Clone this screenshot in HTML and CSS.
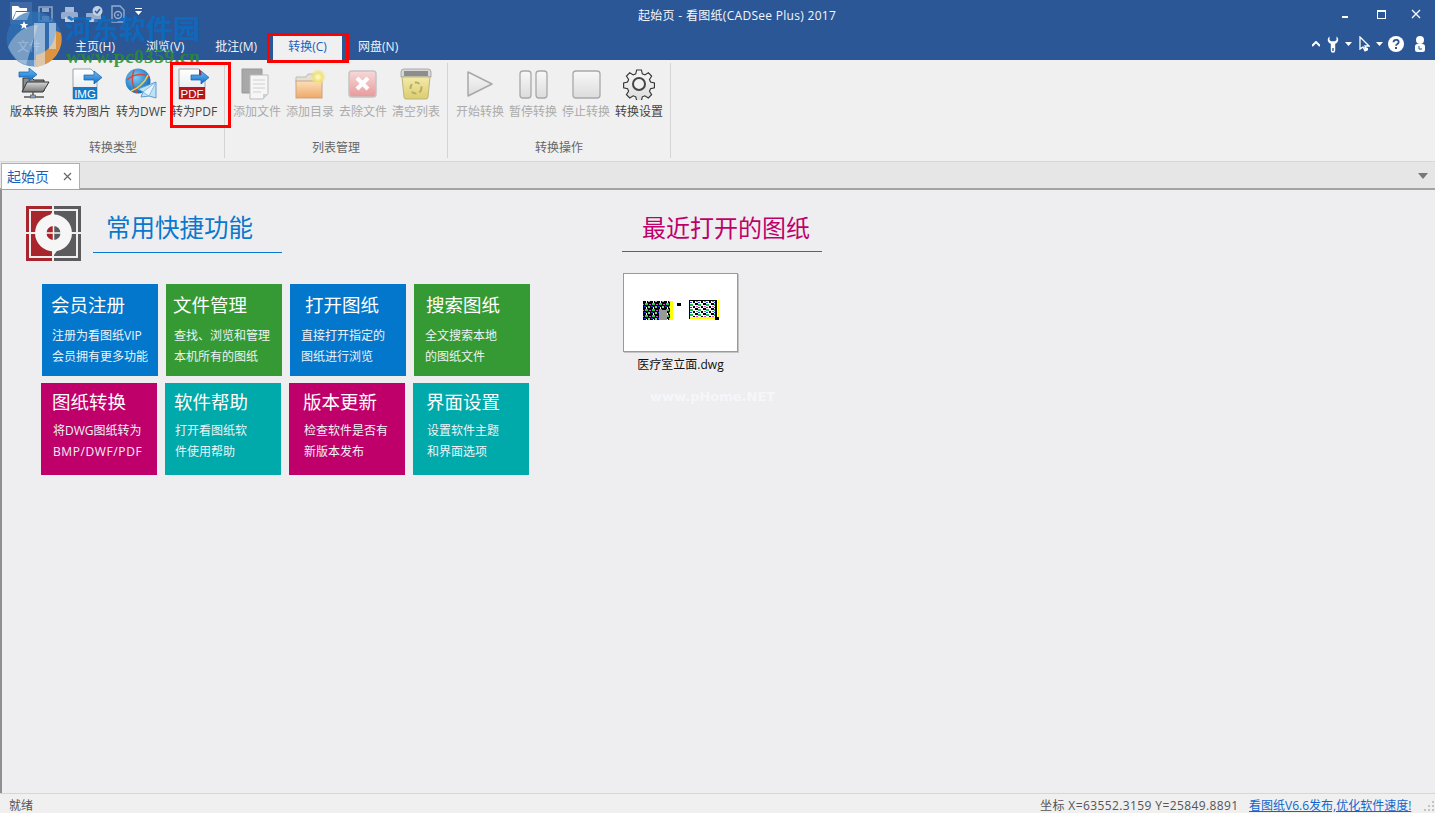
FILE: index.html
```html
<!DOCTYPE html>
<html lang="zh-CN">
<head>
<meta charset="utf-8">
<title>看图纸(CADSee Plus) 2017</title>
<link rel="stylesheet" href="styles.css">
</head>
<body>
<svg class="defs" width="0" height="0" aria-hidden="true">
  <defs>
    <linearGradient id="arrowG" x1="0" y1="0" x2="0" y2="1"><stop offset="0" stop-color="#6db9f2"/><stop offset="1" stop-color="#0e6fc9"/></linearGradient>
    <linearGradient id="pageG" x1="0" y1="0" x2="0" y2="1"><stop offset="0" stop-color="#ffffff"/><stop offset="1" stop-color="#dfe3e8"/></linearGradient>
    <linearGradient id="folderG" x1="0" y1="0" x2="0" y2="1"><stop offset="0" stop-color="#d8d8d8"/><stop offset="1" stop-color="#777"/></linearGradient>
    <linearGradient id="orangeG" x1="0" y1="0" x2="0" y2="1"><stop offset="0" stop-color="#fbe0ba"/><stop offset="1" stop-color="#f0a868"/></linearGradient>
    <linearGradient id="binG" x1="0" y1="0" x2="0" y2="1"><stop offset="0" stop-color="#f3eaa8"/><stop offset="1" stop-color="#dccd70"/></linearGradient>
    <linearGradient id="redG" x1="0" y1="0" x2="0" y2="1"><stop offset="0" stop-color="#f7d9d9"/><stop offset="1" stop-color="#e79a9c"/></linearGradient>
    <linearGradient id="glassG" x1="0" y1="0" x2="0" y2="1"><stop offset="0" stop-color="#f8f8f8"/><stop offset="1" stop-color="#dcdcdc"/></linearGradient>
    <radialGradient id="globeG" cx=".4" cy=".35" r=".7"><stop offset="0" stop-color="#7fd0f5"/><stop offset="1" stop-color="#0b62b8"/></radialGradient>
    <radialGradient id="glowG"><stop offset="0" stop-color="#fffbd0"/><stop offset=".55" stop-color="#efe27a"/><stop offset="1" stop-color="#efe27a" stop-opacity="0"/></radialGradient>
    <pattern id="noiseA" width="7" height="6" patternUnits="userSpaceOnUse">
      <rect width="7" height="6" fill="#000"/>
      <rect x="1" y="0" width="3" height="2" fill="#19d640"/>
      <rect x="5" y="1" width="2" height="1" fill="#e048e0"/>
      <rect x="4" y="3" width="2" height="2" fill="#7ad98a"/>
      <rect x="0" y="3" width="2" height="1" fill="#1c3cf0"/>
      <rect x="2" y="4" width="1" height="2" fill="#fff"/>
    </pattern>
    <pattern id="noiseB" width="8" height="5" patternUnits="userSpaceOnUse">
      <rect width="8" height="5" fill="#fff"/>
      <rect x="0" y="0" width="3" height="2" fill="#000"/>
      <rect x="3" y="1" width="3" height="2" fill="#1bbf50"/>
      <rect x="6" y="3" width="2" height="2" fill="#000"/>
      <rect x="1" y="3" width="2" height="1" fill="#e040d0"/>
      <rect x="3" y="4" width="2" height="1" fill="#1c3cf0"/>
    </pattern>
  </defs>
</svg>

<div class="app">
  <header class="chrome">
    <div class="title-row">
      <div class="qat">
        <span class="qat-open">
          <svg width="20" height="18" viewBox="0 0 20 18"><path d="M1 16V2h6l2 2h7v3H5L1 16zM5 8h14l-3 8H2z" fill="#fff"/></svg>
        </span>
        <svg class="qat-icon" width="15" height="16" viewBox="0 0 15 16"><path d="M1 1h13v14H1z" fill="none" stroke="#8ea6c9" stroke-width="1.500"/><rect x="4" y="2" width="7" height="4" fill="#8ea6c9"/><rect x="4" y="10" width="7" height="5" fill="#8ea6c9"/></svg>
        <svg class="qat-icon" width="17" height="17" viewBox="0 0 17 17"><rect x="4" y="1" width="9" height="5" fill="#a8bad4"/><rect x="0" y="6" width="17" height="7" rx="1.500" fill="#96acce"/><rect x="4" y="11" width="9" height="5" fill="#c3d0e2"/></svg>
        <svg class="qat-icon" width="17" height="17" viewBox="0 0 17 17"><rect x="0" y="7" width="15" height="7" rx="1" fill="#96acce"/><rect x="3" y="13" width="9" height="3" fill="#c3d0e2"/><circle cx="11.500" cy="5" r="5" fill="#c3d0e2"/><path d="M9 5l2 2 3-4" fill="none" stroke="#2b5797" stroke-width="1.400"/></svg>
        <svg class="qat-icon" width="15" height="18" viewBox="0 0 15 18"><path d="M1 1h8l4 4v12H1z" fill="none" stroke="#96acce" stroke-width="1.400"/><circle cx="7" cy="10" r="3.500" fill="none" stroke="#96acce" stroke-width="1.400"/><circle cx="7" cy="10" r="1" fill="#96acce"/></svg>
        <svg class="qat-caret" width="7" height="7" viewBox="0 0 7 7"><rect x="0" y="0" width="7" height="1" fill="#fff"/><path d="M0 3h7L3.500 7z" fill="#fff"/></svg>
      </div>
      <div class="window-title">起始页 - 看图纸(CADSee Plus) 2017</div>
      <div class="window-controls">
        <svg class="win-min" width="10" height="10" viewBox="0 0 10 10"><rect x="1" y="7" width="6" height="2" fill="#fff"/></svg>
        <svg class="win-max" width="10" height="10" viewBox="0 0 10 10"><rect x=".5" y="1.500" width="8" height="8" fill="none" stroke="#fff"/><rect y="1" width="9" height="2" fill="#fff"/></svg>
        <svg class="win-close" width="10" height="10" viewBox="0 0 10 10"><path d="M1 1l8 8M9 1L1 9" stroke="#fff" stroke-width="1.300"/></svg>
      </div>
    </div>
    <div class="tab-row">
      <nav class="menu-tabs">
        <span class="menu-tab first">文件</span>
        <span class="menu-tab">主页(H)</span>
        <span class="menu-tab">浏览(V)</span>
        <span class="menu-tab">批注(M)</span>
        <span class="menu-tab active">转换(C)</span>
        <span class="menu-tab">网盘(N)</span>
      </nav>
      <div class="tools">
        <svg class="tool-up" width="8" height="6" viewBox="0 0 8 6"><path d="M0 5l4-4 4 4" fill="none" stroke="#fff" stroke-width="2"/></svg>
        <svg class="tool-wrench" width="12" height="17" viewBox="0 0 12 17"><path d="M2.500.5C0 2.500 0 6.300 3.800 7.800V14.500a2.200 2.200 0 0 0 4.400 0V7.800C12 6.300 12 2.500 9.500.5V4L8 5.200H4L2.500 4z" fill="#fff"/><rect x="5.300" y="12" width="1.400" height="3" fill="#2b5797"/></svg>
        <svg class="tool-caret" width="7" height="4" viewBox="0 0 7 4"><path d="M0 0h7L3.500 4z" fill="#fff"/></svg>
        <svg class="tool-cursor" width="11" height="16" viewBox="0 0 11 16"><path d="M1 1v12l3-2 2 4 2-1-2-4h4z" fill="#2b5797" stroke="#fff" stroke-width="1.300"/><path d="M5 11l4 1v2l-3 1z" fill="#fff"/></svg>
        <svg class="tool-caret second" width="7" height="4" viewBox="0 0 7 4"><path d="M0 0h7L3.500 4z" fill="#fff"/></svg>
        <svg class="tool-help" width="16" height="16" viewBox="0 0 16 16"><circle cx="8" cy="8" r="8" fill="#fff"/><path d="M5.500 6.200c0-3.200 5.200-3.200 5.200-.2 0 2-2.700 1.800-2.700 3.800" fill="none" stroke="#2b5797" stroke-width="1.800"/><rect x="7" y="11" width="2" height="2" fill="#2b5797"/></svg>
        <svg class="tool-user" width="12" height="16" viewBox="0 0 12 16"><circle cx="6" cy="4" r="4" fill="#fff"/><rect x="1" y="8" width="10" height="8" rx="2.500" fill="#fff"/><path d="M5 10v3h3" fill="none" stroke="#2b5797"/></svg>
      </div>
    </div>
  </header>

  <section class="ribbon">
    <div class="group group-a">
      <div class="group-items">
        <div class="rb">
          <svg width="32" height="32" viewBox="0 0 32 32">
            <path d="M5 10h9l2 2h10v11H5z" fill="#8d8d8d" stroke="#333"/>
            <path d="M9 14h22l-6 10H4z" fill="url(#folderG)" stroke="#333"/>
            <path d="M15 24v4M6 29h20" stroke="#555" stroke-width="1.500"/>
            <rect x="12.500" y="27" width="5" height="3" fill="#8aa3c0" stroke="#555" stroke-width=".6"/>
            <path d="M1 4h10V0l8 6.500-8 6.500V9H1z" fill="url(#arrowG)" stroke="#0b5fae" stroke-width=".7"/>
          </svg>
          <span class="rb-label">版本转换</span>
        </div>
        <div class="rb">
          <svg width="32" height="32" viewBox="0 0 32 32">
            <path d="M2 1h18l6 6v24H2z" fill="url(#pageG)" stroke="#9aa4ae"/>
            <rect x="2" y="19" width="24" height="12" fill="#1479c7"/>
            <text x="14" y="29.500" class="svg-tag">IMG</text>
            <path d="M13 7h10V3l8 6.500-8 6.500v-4H13z" fill="url(#arrowG)" stroke="#0b5fae" stroke-width=".7"/>
          </svg>
          <span class="rb-label">转为图片</span>
        </div>
        <div class="rb">
          <svg width="32" height="32" viewBox="0 0 32 32">
            <circle cx="13" cy="13" r="12.500" fill="url(#globeG)"/>
            <path d="M2 12c6-6 16-7 22-3M9 2c-3 8-2 16 3 23" fill="none" stroke="#d9473f" stroke-width="1.500"/>
            <path d="M6 23c6-2 14-8 17-16" fill="none" stroke="#f2d23c" stroke-width="1.500"/>
            <path d="M31 14v16l-7-2-8 1 2-5-5-3z" fill="#bfe2f8" stroke="#5b9ccc"/>
            <path d="M31 14L18 24l6 4z" fill="#e8f6ff" stroke="#5b9ccc" stroke-width=".6"/>
          </svg>
          <span class="rb-label">转为DWF</span>
        </div>
        <div class="rb">
          <svg width="32" height="32" viewBox="0 0 32 32">
            <path d="M1 1h20l6 6v24H1z" fill="url(#pageG)" stroke="#9aa4ae"/>
            <path d="M21 1l6 6h-6z" fill="#c82127"/>
            <rect x="1" y="19" width="26" height="12" fill="#b5161c"/>
            <text x="14" y="29.500" class="svg-tag">PDF</text>
            <path d="M13 7h10V3l8 6.500-8 6.500v-4H13z" fill="url(#arrowG)" stroke="#0b5fae" stroke-width=".7"/>
          </svg>
          <span class="rb-label">转为PDF</span>
        </div>
      </div>
      <div class="group-label">转换类型</div>
    </div>

    <div class="group group-b">
      <div class="group-items">
        <div class="rb off">
          <svg width="32" height="32" viewBox="0 0 32 32">
            <path d="M1 1h20v24H1z" fill="#a8a8a8" stroke="#999"/>
            <path d="M9 7h18v19l-5 5H9z" fill="#f6f6f6" stroke="#bbb"/>
            <path d="M12 12h12M12 16h12M12 20h12M12 24h8" stroke="#d0d0d0"/>
            <path d="M27 26l-5 5v-5z" fill="#d0d0d0"/>
          </svg>
          <span class="rb-label">添加文件</span>
        </div>
        <div class="rb off">
          <svg width="32" height="32" viewBox="0 0 32 32">
            <path d="M2 9h10l2-3h10v8H2z" fill="#e6e0d4" stroke="#bbb"/>
            <rect x="2" y="13" width="26" height="17" fill="url(#orangeG)" stroke="#c9a383"/>
            <circle cx="24" cy="9" r="8" fill="url(#glowG)"/>
          </svg>
          <span class="rb-label">添加目录</span>
        </div>
        <div class="rb off">
          <svg width="32" height="32" viewBox="0 0 32 32">
            <rect x="2" y="3" width="27" height="26" rx="3" fill="url(#redG)" stroke="#c4c4c4" stroke-width="1.500"/>
            <path d="M10 10l11 11M21 10L10 21" stroke="#fff" stroke-width="4"/>
          </svg>
          <span class="rb-label">去除文件</span>
        </div>
        <div class="rb off">
          <svg width="32" height="32" viewBox="0 0 32 32">
            <path d="M1 4q0-3 3-3h24q3 0 3 3v5H1z" fill="#d6d6d6" stroke="#aaa"/>
            <rect x="4" y="3" width="24" height="5" fill="#8d8d8d"/>
            <path d="M2 9h28l-2 20q0 2-2 2H6q-2 0-2-2z" fill="url(#binG)" stroke="#bcb47a"/>
            <circle cx="16" cy="20" r="5.500" fill="none" stroke="#b5ac6a" stroke-width="2" stroke-dasharray="5 3"/>
          </svg>
          <span class="rb-label">清空列表</span>
        </div>
      </div>
      <div class="group-label">列表管理</div>
    </div>

    <div class="group group-b group-c">
      <div class="group-items">
        <div class="rb off">
          <svg width="32" height="32" viewBox="0 0 32 32"><path d="M4 4l24 12L4 28z" fill="url(#glassG)" stroke="#a8a8a8" stroke-width="1.500" stroke-linejoin="round"/></svg>
          <span class="rb-label">开始转换</span>
        </div>
        <div class="rb off">
          <svg width="32" height="32" viewBox="0 0 32 32"><rect x="3" y="3" width="11" height="27" rx="3" fill="url(#glassG)" stroke="#a8a8a8" stroke-width="1.300"/><rect x="19" y="3" width="11" height="27" rx="3" fill="url(#glassG)" stroke="#a8a8a8" stroke-width="1.300"/></svg>
          <span class="rb-label">暂停转换</span>
        </div>
        <div class="rb off">
          <svg width="32" height="32" viewBox="0 0 32 32"><rect x="3" y="3" width="27" height="27" rx="3" fill="url(#glassG)" stroke="#a8a8a8" stroke-width="1.300"/></svg>
          <span class="rb-label">停止转换</span>
        </div>
        <div class="rb">
          <svg width="32" height="32" viewBox="0 0 32 32">
            <path d="M13.500 1h5l1 4.200 2.700 1.100 3.700-2.300 3.500 3.500-2.300 3.700 1.100 2.700 4.200 1v5l-4.200 1-1.100 2.700 2.300 3.700-3.500 3.500-3.700-2.300-2.700 1.100-1 4.200h-5l-1-4.200-2.700-1.100-3.700 2.300-3.500-3.500 2.300-3.700-1.100-2.700-4.200-1v-5l4.200-1 1.100-2.700-2.300-3.700 3.500-3.500 3.700 2.300 2.700-1.100z" transform="translate(1 1) scale(.94)" fill="url(#glassG)" stroke="#333" stroke-width="1.200"/>
            <circle cx="16" cy="16" r="6" fill="#f0f0f0" stroke="#444" stroke-width="2"/>
          </svg>
          <span class="rb-label">转换设置</span>
        </div>
      </div>
      <div class="group-label">转换操作</div>
    </div>
  </section>

  <div class="doc-bar">
    <div class="doc-tab">
      <span class="doc-name">起始页</span>
      <svg class="doc-close" width="9" height="9" viewBox="0 0 9 9"><path d="M1 1l7 7M8 1L1 8" stroke="#666" stroke-width="1.200"/></svg>
    </div>
    <svg class="doc-menu" width="10" height="6" viewBox="0 0 10 6"><path d="M0 0h10L5 6z" fill="#777"/></svg>
  </div>

  <main class="start">
    <div class="shortcuts">
      <div class="shortcuts-head">
        <svg class="brand" width="55" height="55" viewBox="0 0 55 55">
          <rect width="26" height="55" fill="#a9252c"/>
          <rect x="28" width="27" height="55" fill="#5b5a5c"/>
          <path d="M4 4h47v47H4z" fill="none" stroke="#efeff1" stroke-width="2"/>
          <path d="M0 27h55M27 0v55" stroke="#efeff1" stroke-width="2"/>
          <circle cx="27.500" cy="27" r="18.500" fill="#f6f6f6"/>
          <path d="M20 15l7-10 3 7z" fill="#f6f6f6"/>
          <path d="M35 39l-7 10-3-7z" fill="#f6f6f6"/>
          <path d="M27.500 20a7 7 0 0 0 0 14z" fill="#a9252c"/>
          <path d="M27.500 20a7 7 0 0 1 0 14z" fill="#5b5a5c"/>
          <path d="M19 27h17M27.500 18v18" stroke="#f6f6f6" stroke-width="1.500"/>
        </svg>
        <h2 class="head-blue">常用快捷功能</h2>
      </div>
      <div class="tile-row">
        <a class="tile blue pad-10"><b>会员注册</b><span>注册为看图纸VIP</span><span>会员拥有更多功能</span></a>
        <a class="tile green pad-8"><b>文件管理</b><span>查找、浏览和管理</span><span>本机所有的图纸</span></a>
        <a class="tile blue pad-11"><b class="nudge-4">打开图纸</b><span>直接打开指定的</span><span>图纸进行浏览</span></a>
        <a class="tile green pad-11"><b class="nudge-1">搜索图纸</b><span>全文搜索本地</span><span>的图纸文件</span></a>
      </div>
      <div class="tile-row lower">
        <a class="tile magenta pad-12"><b>图纸转换</b><span>将DWG图纸转为</span><span class="wide">BMP/DWF/PDF</span></a>
        <a class="tile teal pad-10"><b>软件帮助</b><span>打开看图纸软</span><span>件使用帮助</span></a>
        <a class="tile magenta pad-15"><b>版本更新</b><span>检查软件是否有</span><span>新版本发布</span></a>
        <a class="tile teal pad-14"><b>界面设置</b><span>设置软件主题</span><span>和界面选项</span></a>
      </div>
    </div>

    <div class="recent">
      <h2 class="head-pink">最近打开的图纸</h2>
      <div class="thumb">
        <svg width="113" height="77" viewBox="1 1 113 77" shape-rendering="crispEdges">
          <rect x="47" y="28" width="3" height="19" fill="#ff0"/>
          <rect x="20" y="28" width="27" height="19" fill="url(#noiseA)"/>
          <rect x="36" y="37" width="8" height="10" fill="#999"/>
          <rect x="54" y="30" width="4" height="3" fill="#000"/>
          <rect x="66" y="27" width="28" height="19" fill="#ff0"/>
          <rect x="66" y="27" width="27" height="17" fill="url(#noiseB)"/>
          <rect x="66" y="27" width="27" height="1" fill="#000"/>
          <rect x="92" y="27" width="2" height="17" fill="#000"/>
          <rect x="66" y="27" width="1" height="19" fill="#000"/>
          <rect x="95" y="27" width="1" height="18" fill="#ff0"/>
          <rect x="92" y="44" width="4" height="3" fill="#000"/>
        </svg>
      </div>
      <div class="thumb-name">医疗室立面.dwg</div>
      <div class="phome">www.pHome.NET</div>
    </div>
  </main>

  <footer class="status">
    <span class="status-text">就绪</span>
    <span class="coords">坐标 X=63552.3159 Y=25849.8891</span>
    <a class="news">看图纸V6.6发布,优化软件速度!</a>
    <svg class="grip" width="12" height="12" viewBox="0 0 12 12"><path d="M9 1h2v2H9zM5 5h2v2H5zM9 5h2v2H9zM1 9h2v2H1zM5 9h2v2H5zM9 9h2v2H9z" fill="#c4c4c4"/></svg>
  </footer>

  <div class="marks" aria-hidden="true">
    <svg class="mark-logo" width="56" height="56" viewBox="0 0 56 56">
      <circle cx="28" cy="28" r="27.500" fill="#2f74b8" fill-opacity=".7"/>
      <path d="M2 36C8 22 20 14 32 14L20 54Q8 50 2 36z" fill="#e8e8e8" fill-opacity=".4"/>
      <path d="M55 22A27.500 27.500 0 0 1 30 55.500V44Q48 40 50 20z" fill="#dc9440"/>
      <path d="M28 12h11v43H28zM43 12h7v26h-7z" fill="#dfe8f2" fill-opacity=".6"/>
      <path d="M18 10l1.200 3h3l-2.400 2 1 3-2.800-1.800L15.200 18l1-3-2.400-2h3z" fill="#fff"/>
    </svg>
    <div class="mark-cn">河东软件园</div>
    <div class="mark-url">www.pc0359.cn</div>
  </div>
  <div class="hl hl-tab"></div>
  <div class="hl hl-pdf"></div>
</div>
</body>
</html>
```

FILE: styles.css
```css
* { box-sizing: border-box; }
html, body { margin: 0; height: 100%; overflow: hidden; }
body { font-family: "Open Sans", "Noto Sans CJK SC", sans-serif; font-size: 12px; color: #333; }
.defs { position: absolute; }
svg { display: block; flex: none; }

.app { position: relative; width: 1435px; height: 813px; display: flex; flex-direction: column; overflow: hidden; }

/* title area */
.chrome { height: 60px; background: #2b5797; color: #fff; flex: none; }
.title-row { height: 30px; display: flex; align-items: flex-start; }
.qat { display: flex; align-items: center; height: 22px; padding-left: 10px; width: 638px; margin-top: 3px; }
.qat-open { width: 22px; height: 22px; background: #3f6aa6; display: flex; align-items: center; justify-content: center; margin-top: -2px; }
.qat-icon { margin-left: 6px; }
.qat-icon + .qat-icon { margin-left: 8px; }
.qat-caret { margin-left: 9px; margin-top: -5px; }
.window-title { line-height: 32px; width: 200px; white-space: nowrap; color: #f4f6fa; letter-spacing: .3px; }
.window-controls { display: flex; align-items: center; height: 28px; margin-left: 497px; }
.win-min { margin-left: 6px; }
.win-max { margin-left: 26px; }
.win-close { margin-left: 24px; }

.tab-row { height: 30px; display: flex; justify-content: space-between; align-items: flex-start; }
.menu-tabs { display: flex; height: 30px; }
.menu-tab { line-height: 33px; color: #f0f3f8; margin-left: 31px; white-space: nowrap; }
.menu-tab.first { margin-left: 17px; margin-right: 3px; }
.menu-tab.active { background: #f0f0f0; color: #1a5fbe; width: 69px; text-align: center; margin-left: 16px; height: 27px; margin-top: 3px; line-height: 27px; }
.menu-tab.active + .menu-tab { margin-left: 16px; }
.tools { display: flex; align-items: center; height: 28px; padding-right: 9px; }
.tool-wrench { margin-left: 7px; }
.tool-caret { margin-left: 6px; }
.tool-cursor { margin-left: 7px; }
.tool-caret.second { margin-left: 6px; }
.tool-help { margin-left: 5px; }
.tool-user { margin-left: 10px; }

/* ribbon */
.ribbon { height: 102px; background: #f0f0f0; display: flex; border-bottom: 1px solid #d8d8d8; flex: none; padding-top: 3px; }
.group { width: 225px; height: 95px; border-right: 1px solid #d4d4d4; padding-left: 10px; padding-top: 5px; display: flex; flex-direction: column; }
.group-b { width: 223px; padding-left: 8px; }
.group-items { display: flex; gap: 5px; height: 72px; }
.rb { display: flex; flex-direction: column; align-items: center; white-space: nowrap; }
.rb-label { margin-top: 4px; line-height: 16px; color: #444; }
.rb.off .rb-label { color: #ababab; }
.group-label { text-align: center; line-height: 16px; color: #666; margin-left: -8px; }
.svg-tag { font-family: "Liberation Sans", sans-serif; font-size: 11.500px; fill: #fff; text-anchor: middle; }

/* document tabs */
.doc-bar { height: 28px; background: #e6e6e6; flex: none; display: flex; align-items: flex-end; justify-content: space-between; position: relative; padding-left: 1px; border-bottom: 2px solid #a3a3a3; }
.doc-tab { width: 79px; height: 26px; background: #fff; border: 1px solid #b0b0b0; border-bottom: 0; display: flex; align-items: center; justify-content: space-between; padding: 0 7px 0 5px; margin-bottom: -1px; }
.doc-name { font-size: 14px; color: #1a5fbe; line-height: 26px; }
.doc-menu { margin: 0 7px 9px 0; }

/* start page */
.start { flex: 1; background: #eeeef1; border-left: 2px solid #8f8f8f; display: flex; padding: 16px 0 0 24px; position: relative; min-height: 0; }
.shortcuts { width: 596px; flex: none; }
.shortcuts-head { display: flex; height: 78px; }
.head-blue { margin: 0 0 0 12px; width: 189px; height: 47px; padding-left: 13px; font-size: 24.500px; font-weight: 400; line-height: 44px; color: #0a78cc; border-bottom: 1px solid #0a78cc; white-space: nowrap; }
.tile-row { display: flex; gap: 8px; margin-left: 16px; }
.tile-row.lower { margin: 7px 0 0 15px; }
.tile { width: 116px; height: 92px; color: #fff; display: flex; flex-direction: column; padding-top: 8px; }
.tile b { font-size: 18.500px; font-weight: 400; line-height: 26px; margin: 0 0 7px -1px; white-space: nowrap; }
.lower .tile { padding-top: 6px; }
.lower .tile b { margin-bottom: 5px; }
.tile span { line-height: 21px; color: #eef3f6; white-space: nowrap; }
.tile span.wide { letter-spacing: .6px; }
.blue { background: #0277cc; }
.green { background: #359a34; }
.magenta { background: #c0006a; }
.teal { background: #00a9aa; }
.pad-8 { padding-left: 8px; }
.pad-10 { padding-left: 10px; }
.pad-11 { padding-left: 11px; }
.pad-12 { padding-left: 12px; }
.pad-14 { padding-left: 14px; }
.pad-15 { padding-left: 15px; }
.tile b.nudge-4 { margin-left: 4px; }
.tile b.nudge-1 { margin-left: 1px; }

.recent { width: 200px; flex: none; position: relative; }
.head-pink { margin: 0; height: 46px; padding-left: 20px; font-size: 24px; font-weight: 400; line-height: 44px; color: #c0006a; border-bottom: 1px solid #0a78cc; white-space: nowrap; }
.thumb { width: 115px; height: 79px; margin: 21px 0 0 1px; background: #fff; border: 1px solid #999; box-shadow: 1px 1px 0 #c4c4c4; }
.thumb-name { width: 117px; text-align: center; color: #111; line-height: 18px; margin-top: 4px; white-space: nowrap; }
.phome { position: absolute; left: 28px; top: 183px; font: 700 13px "DejaVu Sans", sans-serif; color: #f5f6f9; white-space: nowrap; }

/* status bar */
.status { height: 20px; background: #f0f0f0; border-top: 1px solid #d6d6d6; display: flex; align-items: center; padding: 2px 0 0 9px; flex: none; color: #555; }
.status-text { width: 1031px; }
.coords { width: 209px; white-space: nowrap; letter-spacing: .4px; }
.news { color: #1166cc; text-decoration: underline; white-space: nowrap; width: 174px; }
.grip { margin-top: 2px; }

/* overlays */
.marks { position: absolute; left: 5px; top: 10px; width: 200px; height: 58px; pointer-events: none; }
.mark-logo { position: absolute; left: 1px; top: 1px; }
.mark-cn { position: absolute; left: 60px; top: 0; font: 700 27px/36px "Noto Sans CJK SC", sans-serif; color: #0a6cc2; opacity: .85; white-space: nowrap; }
.mark-url { position: absolute; left: 61px; top: 36px; font: 700 19.500px/22px "Liberation Serif", serif; color: #2b8a34; opacity: .85; white-space: nowrap; letter-spacing: .4px; }
.hl { position: absolute; border: 3px solid #f00; pointer-events: none; }
.hl-tab { left: 267px; top: 33px; width: 82px; height: 30px; }
.hl-pdf { left: 170px; top: 62px; width: 61px; height: 66px; }
```
